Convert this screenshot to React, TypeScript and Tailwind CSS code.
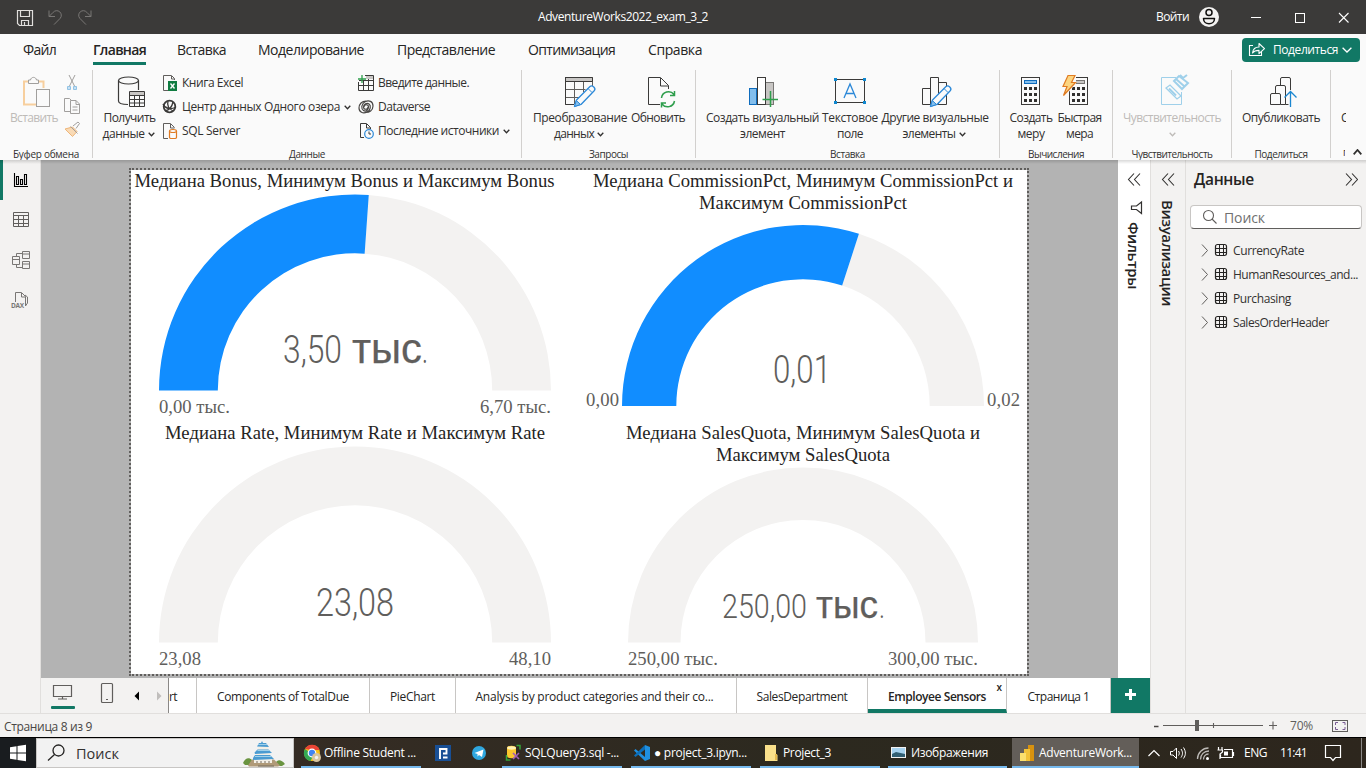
import React, { useLayoutEffect, useRef } from "react";

/* Text set to a given advance length by spreading its letter spacing. */
function T({ w, v, className = "", children }: { w: number; v?: boolean; className?: string; children: string }) {
  const ref = useRef<HTMLSpanElement>(null);
  useLayoutEffect(() => {
    const el = ref.current;
    if (!el) return;
    el.style.letterSpacing = "0px";
    const box = el.getBoundingClientRect();
    const len = v ? box.height : box.width;
    el.style.letterSpacing = `${(w - len) / children.length}px`;
  }, [w, v, children]);
  return (
    <span ref={ref} className={`inline-block shrink-0 whitespace-pre ${className}`}>
      {children}
    </span>
  );
}

/* Drawing whose coordinates are window coordinates of its own slot. */
function Art({ x, y, w, h, children }: { x: number; y: number; w: number; h: number; children: React.ReactNode }) {
  return (
    <svg width={w} height={h} viewBox={`${x} ${y} ${w} ${h}`} fill="none" className="block shrink-0">
      {children}
    </svg>
  );
}

function Chevron({ className = "text-[#323130]" }: { className?: string }) {
  return (
    <svg width="7" height="5" viewBox="0 0 7 5" fill="none" className={`shrink-0 ${className}`}>
      <path d="M.7 .8 3.5 3.8 6.3 .8" stroke="currentColor" strokeWidth="1.3" />
    </svg>
  );
}

const INK = "#3b3a39";

function TitleBar() {
  return (
    <header className="flex h-[34px] shrink-0 items-center bg-[#3b3a39] text-white">
      <div className="w-[538px]">
        <Art x={0} y={0} w={120} h={34}>
          <path d="M17.500 10.500h15v15h-13l-2-2z" stroke="#e1dfdd" strokeWidth="1.200" />
          <path d="M20.500 11v5.500h9V11M21.500 25v-4.500h7V25M24.500 22v3" stroke="#e1dfdd" strokeWidth="1.200" />
          <path d="M49 10.500v6h6M49.200 16.300l4-4a4.600 4.600 0 0 1 7 6l-6.200 6.300" stroke="#797775" />
          <path d="M91 10.500v6h-6M90.800 16.300l-4-4a4.600 4.600 0 0 0-7 6l6.200 6.300" stroke="#797775" />
        </Art>
      </div>
      <T w={170} className="text-[12px]">AdventureWorks2022_exam_3_2</T>
      <div className="ml-auto flex items-center">
        <T w={33} className="mr-[9px] text-[12px]">Войти</T>
        <Art x={1198} y={0} w={168} h={34}>
          <circle cx="1209" cy="17" r="10" fill="#f3f2f1" />
          <circle cx="1209" cy="12.500" r="3" stroke="#11100f" strokeWidth="1.500" />
          <path d="M1203.500 18.500h11c0 7-11 7-11 0z" stroke="#11100f" strokeWidth="1.500" strokeLinejoin="round" />
          <path d="M1251 17.500h10M1339 13l9.500 9.500M1348.500 13l-9.500 9.500" stroke="#fff" strokeWidth="1.100" />
          <rect x="1295.500" y="13.500" width="9" height="9" stroke="#fff" />
        </Art>
      </div>
    </header>
  );
}

function MenuBar() {
  return (
    <nav className="flex h-8 shrink-0 bg-[#fafafa] text-[14px] leading-8 text-[#252423]">
      <T w={33} className="ml-[23px]">Файл</T>
      <div className="ml-[37px] flex flex-col">
        <T w={53} className="h-7 font-semibold">Главная</T>
        <div className="h-[3px] w-[53px] bg-[#117865]" />
      </div>
      <T w={49} className="ml-[31px]">Вставка</T>
      <T w={106} className="ml-[32px]">Моделирование</T>
      <T w={98} className="ml-[33px]">Представление</T>
      <T w={87} className="ml-[33px]">Оптимизация</T>
      <T w={54} className="ml-[33px]">Справка</T>
      <button className="mt-1 mr-[6px] ml-auto flex h-6 w-[118px] items-center rounded bg-[#117865] text-white">
        <Art x={1242} y={38} w={31} h={24}>
          <path d="M1253 45.500h-3.500v10h12v-4" stroke="#fff" strokeWidth="1.100" />
          <path d="M1252.500 53c.5-4 3-6 6.500-6v-3.500l5.500 5.200-5.500 5v-3.300c-3 0-5 .6-6.500 2.600z" stroke="#fff" strokeWidth="1.100" strokeLinejoin="round" />
        </Art>
        <T w={65} className="text-[12px] leading-6">Поделиться</T>
        <svg width="10" height="6" viewBox="0 0 10 6" fill="none" className="ml-1">
          <path d="M.6 .7 5 5 9.400 .7" stroke="#fff" strokeWidth="1.300" />
        </svg>
      </button>
    </nav>
  );
}

function Big({ x, w, lines, chev, off, children }: {
  x: number; w: number; lines: [string, number][]; chev?: boolean; off?: boolean; children: React.ReactNode;
}) {
  return (
    <div className={`flex shrink-0 flex-col items-center text-[12px] leading-4 ${off ? "text-[#bebbb8]" : "text-[#323130]"}`}>
      <Art x={x} y={70} w={w} h={40}>{children}</Art>
      {lines.map(([text, len], i) => (
        <div key={i} className={`flex h-4 items-center gap-[3px] ${chev && text && i === lines.length - 1 ? "pr-[2px]" : ""}`}>
          {text && <T w={len}>{text}</T>}
          {chev && i === lines.length - 1 && <Chevron className={off ? "text-[#bebbb8]" : "text-[#323130]"} />}
        </div>
      ))}
    </div>
  );
}

function Group({ cls, name, len, children }: { cls: string; name: string; len: number; children: React.ReactNode }) {
  return (
    <section className={`flex shrink-0 flex-col border-r border-[#d2d0ce] ${cls}`}>
      <div className="flex h-[77px] shrink-0">{children}</div>
      <div className="flex h-[13px] shrink-0 justify-center pt-px text-[10px] leading-[13px] text-[#323130]">
        <T w={len}>{name}</T>
      </div>
    </section>
  );
}

function Row({ icon, text, len, chev }: { icon: React.ReactNode; text: string; len: number; chev?: boolean }) {
  return (
    <div className="flex h-6 items-center text-[12px] leading-6 text-[#323130]">
      <svg width="16" height="16" viewBox="0 0 16 16" fill="none" className="mr-[4px] shrink-0">{icon}</svg>
      <T w={len}>{text}</T>
      {chev && <div className="ml-1 flex"><Chevron /></div>}
    </div>
  );
}

const pencil = (x: number) => (
  <g>
    <path d={`M${x} 106.500l2-6.500 13.500-13.500c2.200-2 6.500 1.800 4.200 4.300L${x + 6.500} 104.500z`} fill="#fafafa" stroke="#2b88d8" strokeWidth="1.300" strokeLinejoin="round" />
    <path d={`M${x} 106.500l1.800-6 4.300 4z`} fill="#83beec" stroke="#2b88d8" />
    <path d={`M${x + 13.500} 88.500l4 4`} stroke="#2b88d8" />
  </g>
);

const keys = (x: number) => (
  <g fill="#323130">
    {[87, 93, 99].map((y) => [0, 5, 10].map((d) => <rect key={`${y}${d}`} x={x + d} y={y} width="3" height="3" />))}
  </g>
);

function Ribbon() {
  return (
    <div className="flex h-[94px] shrink-0 bg-[#fafafa] pt-1">
      <Group cls="h-[88px] w-[93px]" name="Буфер обмена" len={66}>
        <div className="w-1" />
        <Big x={4} w={60} off lines={[["Вставить", 48]]}>
          <path d="M28 81.500h-4v23H36M39 81.500h4.500V88" stroke="#f7cf9e" strokeWidth="2" />
          <path d="M28.500 83.500v-3.500h2c.5-3.500 5.500-3.500 6 0h2v3.500z" fill="#fafafa" stroke="#a19f9d" />
          <rect x="36.500" y="89.500" width="13" height="17" fill="#fafafa" stroke="#a19f9d" />
        </Big>
        <Art x={64} y={70} w={28} h={72}>
          <path d="M69 75l5.500 11M75 75l-5.500 11" stroke="#a19f9d" />
          <path d="M67.500 86.500h3v3h-3zM73.500 86.500h3v3h-3z" fill="#c7e0f4" stroke="#92c3e4" />
          <path d="M70 111.500h-5.500v-13h5l2 2M70.500 100.500h5.500l3.500 3.500v9.500h-9zM76 100.500v4h3.500M72.500 107h5M72.500 110h5" stroke="#a19f9d" />
          <path d="M65 129l7.500-2 4.500 4.500-4.500 5z" fill="#f9dab5" stroke="#eeb67a" />
          <path d="M70.500 126.500l7 7M73 126l5-4 1.500 1.500-3.500 5" stroke="#a19f9d" />
        </Art>
      </Group>

      <Group cls="h-[88px] w-[429px]" name="Данные" len={36}>
        <div className="w-1" />
        <Big x={97} w={65} chev lines={[["Получить", 52], ["данные", 42]]}>
          <ellipse cx="128.500" cy="80.500" rx="10" ry="3.500" stroke={INK} strokeWidth="1.200" />
          <path d="M118.500 80.500v20.500c0 2 4 3.500 9.500 3.500M138.500 80.500V90" stroke={INK} strokeWidth="1.200" />
          <path d="M129.500 91.500h15v15h-15z" fill="#fafafa" stroke={INK} />
          <path d="M130 92h14v3h-14z" fill="#c8c6c4" />
          <path d="M129.500 95.500h15M129.500 99.500h15M129.500 103h15M134.500 95v11M139.500 95v11" stroke={INK} />
        </Big>
        <div className="w-[196px] pt-[1px]">
          <Row text="Книга Excel" len={61} icon={<>
            <path d="M6 15.500H1.500V.500h8l3 3V5M9.500 1v3h3" stroke="#605e5c" />
            <rect x="6" y="6" width="9" height="10" fill="#107c41" />
            <path d="M8.500 8.500l4 5M12.500 8.500l-4 5" stroke="#fff" strokeWidth="1.300" />
          </>} />
          <Row text="Центр данных Одного озера" len={158} chev icon={<>
            <circle cx="7.500" cy="7.500" r="5.800" stroke={INK} strokeWidth="1.800" />
            <path d="M1 5c2 5 8 6 13 3M6 2c-1 4 1 8 5 10M3 12c4-1 7-4 8-9" stroke={INK} strokeWidth="1.300" />
          </>} />
          <Row text="SQL Server" len={58} icon={<>
            <path d="M6 15.500H1.500V.500h7l4 4M8.500 1v4h4" stroke="#605e5c" />
            <path d="M7.500 8v6.500c0 1.500 7 1.500 7 0V8" fill="#fafafa" stroke="#e07b22" strokeWidth="1.200" />
            <ellipse cx="11" cy="8" rx="3.500" ry="1.500" fill="#fafafa" stroke="#e07b22" strokeWidth="1.200" />
          </>} />
        </div>
        <div className="w-[160px] pt-[1px]">
          <Row text="Введите данные." len={91} icon={<>
            <path d="M7 .500h8.500v15H.500V7M1 5.500h14.500M.500 10.500h15M5.500 6v9.500M10.500 1v14.500" stroke={INK} />
            <path d="M8 1h7v3H8z" fill="#c8c6c4" />
            <path d="M4 0v8M0 4h8" stroke="#2e9e4c" strokeWidth="1.300" />
          </>} />
          <Row text="Dataverse" len={52} icon={<>
            <path d="M10 8c0 3-4.500 3-4.500 0S9 3.500 11 5s2 6-2 8-8 0-8-4 3-7 7-7M6 8c0-3 4.500-3 4.500 0S8 13 5.500 11.500 3 5 7 2.800s8-.3 8 4.200-4 6.500-7 6.500" stroke="#484644" strokeWidth="1.200" />
          </>} />
          <Row text="Последние источники" len={121} chev icon={<>
            <path d="M6 14.500H2.500V.500h6l4 4V6M8.500 1v4h4" stroke={INK} />
            <circle cx="11" cy="11" r="4.300" fill="#fafafa" stroke="#2b88d8" strokeWidth="1.200" />
            <path d="M11 8.500V11h2" stroke={INK} />
          </>} />
        </div>
      </Group>

      <Group cls="h-[88px] w-[174px]" name="Запросы" len={39}>
        <div className="w-[7px]" />
        <Big x={529} w={102} chev lines={[["Преобразование", 94], ["данных", 40]]}>
          <path d="M574 104.500h-8.500v-27h27V86M565.500 89.500h20M565.500 97.500h14M574.500 82v22M583.500 82v10" stroke="#605e5c" />
          <path d="M565.500 77.500h27v4h-27z" fill="#c8c6c4" stroke={INK} />
          <path d="M565.500 77v27.500H574" stroke={INK} />
          {pencil(574.500)}
        </Big>
        <Big x={631} w={53} lines={[["Обновить", 54]]}>
          <path d="M659 104.500h-11.500v-27h12l8 8V89M659.500 78v8h8" stroke={INK} />
          <path d="M660.500 98a7 7 0 0 1 12.500-3.500M673.500 91v4.500h-4.500M673.500 101a7 7 0 0 1-12.500 3M660.500 107.500V103h4.500" stroke="#2e9e4c" strokeWidth="1.500" />
        </Big>
      </Group>

      <Group cls="h-[88px] w-[304px]" name="Вставка" len={35}>
        <div className="w-[9px]" />
        <Big x={705} w={115} lines={[["Создать визуальный", 113], ["элемент", 45]]}>
          <rect x="749.500" y="88.500" width="7" height="16" fill="#83beec" stroke="#0f6cbd" />
          <rect x="765.500" y="82.500" width="8" height="22" fill="#c8c6c4" stroke="#797775" />
          <rect x="757.500" y="77.500" width="8" height="27" fill="#fff" stroke={INK} />
          <path d="M770.500 91v16M762.500 99.500h15.500" stroke="#2e9e4c" strokeWidth="1.500" />
        </Big>
        <Big x={820} w={60} lines={[["Текстовое", 56], ["поле", 26]]}>
          <rect x="835.500" y="79.500" width="29" height="23" stroke={INK} />
          <path d="M844 98l6-14 6 14M846 93.500h8" stroke="#2b88d8" strokeWidth="1.300" />
          <path d="M834 78h3v3h-3zM863 78h3v3h-3zM834 101h3v3h-3zM863 101h3v3h-3z" fill="#0f88d0" />
        </Big>
        <Big x={880} w={110} chev lines={[["Другие визуальные", 107], ["элементы", 53]]}>
          <path d="M922.500 88.500h8v16h-8zM930.500 77.500h8v27h-8zM938.500 82.500h8v22h-8z" stroke={INK} />
          {pencil(930.500)}
        </Big>
      </Group>

      <Group cls="h-[88px] w-[113px]" name="Вычисления" len={56}>
        <div className="w-[7px]" />
        <Big x={1007} w={48} lines={[["Создать", 43], ["меру", 27]]}>
          <rect x="1021.500" y="77.500" width="18" height="27" stroke={INK} />
          <rect x="1024.500" y="80.500" width="12" height="3" fill="#83beec" stroke="#0f6cbd" />
          {keys(1024)}
        </Big>
        <Big x={1055} w={49} lines={[["Быстрая", 44], ["мера", 27]]}>
          <rect x="1069.500" y="77.500" width="18" height="27" stroke={INK} />
          <rect x="1072.500" y="80.500" width="12" height="3" fill="#c8c6c4" stroke="#797775" />
          {keys(1072)}
          <path d="M1062 74h14v10l-4 4-8 10h-2z" fill="#fafafa" />
          <path d="M1068 75.500h7l-3.500 7h4l-12 13 3.500-9h-4z" fill="#fcd581" stroke="#e07b22" strokeWidth="1.200" />
        </Big>
      </Group>

      <Group cls="h-[88px] w-[119px]" name="Чувствительность" len={81}>
        <div className="w-[6px]" />
        <Big x={1119} w={106} off chev lines={[["Чувствительность", 98], ["", 0]]}>
          <path d="M1176 77.500h-14.500v27h20V92" stroke="#9fd0ea" />
          <path d="M1166 88l4-3 11 11-4 3z" fill="#fafafa" stroke="#9fd0ea" strokeWidth="1.300" />
          <path d="M1169 88.500l7 7" stroke="#9fd0ea" strokeWidth="2" />
          <path d="M1174 81l5-5 9 7-6 6zM1180 75l3.500 3.500M1176 79l8 7M1183 78l4-3" stroke="#9fd0ea" strokeWidth="2" />
        </Big>
      </Group>

      <Group cls="h-[88px] w-[99px]" name="Поделиться" len={53}>
        <div className="w-[7px]" />
        <Big x={1239} w={84} lines={[["Опубликовать", 78]]}>
          <path d="M1280.500 104.500h-10v-9.500q0-1.500 1.500-1.500h7q1.500 0 1.500 1.500zM1275.500 93v-6q0-1.500 1.500-1.500h7q1.500 0 1.500 1.500v17.500h-5M1280.500 85v-6q0-1.500 1.500-1.500h7q1.500 0 1.500 1.500V90M1285.500 104.500h3" stroke={INK} />
          <path d="M1290.500 107V91.500M1284.500 97.500l6-6 6 6" stroke="#1a86d0" strokeWidth="1.300" />
        </Big>
      </Group>

      <div className="flex flex-1 flex-col pl-[10px] text-[12px] text-[#323130]">
        <div className="mt-10 w-[5px] overflow-hidden leading-4">С</div>
        <div className="mt-[18px] flex items-center gap-[5px] text-[10px] leading-4">
          <span className="w-[4px] overflow-hidden pt-px pl-[2px]">п</span>
          <svg width="9" height="6" viewBox="0 0 9 6" fill="none" className="ml-[3px]"><path d="M.7 5.300 4.500 1l3.800 4.300" stroke="#323130" strokeWidth="1.800" /></svg>
        </div>
      </div>
    </div>
  );
}

function Rail() {
  return (
    <aside className="w-[41px] shrink-0 border-r border-[#e1dfdd] bg-[#f3f2f1]">
      <Art x={0} y={160} w={40} h={160}>
        <path d="M0 160h3v40H0z" fill="#117865" />
        <path d="M14.500 173v13.500H28M16.500 176.500h2v8h-2zM20.500 179.500h2v5h-2zM24.500 174.500h2v10h-2z" stroke="#000" strokeWidth="1.100" />
        <path d="M13.500 212.500h15v14h-15zM13.500 215.500h15M13.500 219.500h15M13.500 223.500h15M18.500 216v11M23.500 216v11" stroke="#605e5c" />
        <path d="M12.500 256.500h7v8h-7zM12.500 259.500h7M22.500 251.500h7v7h-7zM22.500 254h7M22.500 261.500h7v7h-7zM22.500 264h7M16.500 256v-2.500h6M16.500 265v2.500h6" stroke="#797775" />
        <path d="M15.500 302v-9.500h6l4 4v9.500M21.500 293v4h4M25 295l2.500 2v6l-2 3" stroke="#797775" />
        <text x="11" y="307.500" fontSize="6.500" fontWeight="700" fontFamily="Open Sans, sans-serif" textLength="13" fill="#797775">DAX</text>
      </Art>
    </aside>
  );
}

function arc(cx: number, cy: number, r: number, from: number, to: number) {
  const q = r * 0.7;
  const p = (rad: number, f: number) => {
    const a = Math.PI * (1 - f);
    return `${(cx + rad * Math.cos(a)).toFixed(2)} ${(cy - rad * Math.sin(a)).toFixed(2)}`;
  };
  return `M${p(r, from)}A${r} ${r} 0 0 1 ${p(r, to)}L${p(q, to)}A${q} ${q} 0 0 0 ${p(q, from)}Z`;
}

type Piece = { t: string; x: number; len: number; unit?: boolean };
type Gauge = {
  x: number; y: number; title: [string, number][]; shift?: boolean; cx: number; cy: number; r: number; fill: number;
  value: Piece[]; base: number; min: [string, number, number]; max: [string, number, number]; labelY: number; size: number;
};

const gauges: Gauge[] = [
  { x: 131, y: 170, title: [["Медиана Bonus, Минимум Bonus и Максимум Bonus", 420]], shift: true, cx: 355, cy: 390.5, r: 196, fill: 3.5 / 6.7,
    value: [{ t: "3,50", x: 283, len: 59 }, { t: "тыс", x: 352, len: 70, unit: true }, { t: ".", x: 422, len: 6 }], base: 363, min: ["0,00 тыс.", 159, 71], max: ["6,70 тыс.", 480, 71], labelY: 413, size: 38 },
  { x: 579, y: 170, title: [["Медиана CommissionPct, Минимум CommissionPct и", 420], ["Максимум CommissionPct", 208]], cx: 803, cy: 406, r: 181, fill: 0.6,
    value: [{ t: "0,01", x: 773, len: 58 }], base: 382.500, min: ["0,00", 586, 33], max: ["0,02", 987, 33], labelY: 406, size: 38 },
  { x: 131, y: 422, title: [["Медиана Rate, Минимум Rate и Максимум Rate", 380]], cx: 355, cy: 642.5, r: 196, fill: 0,
    value: [{ t: "23,08", x: 316, len: 78 }], base: 615.500, min: ["23,08", 159, 42], max: ["48,10", 509, 42], labelY: 665, size: 38 },
  { x: 579, y: 422, title: [["Медиана SalesQuota, Минимум SalesQuota и", 354], ["Максимум SalesQuota", 174]], cx: 803, cy: 642.5, r: 175, fill: 0,
    value: [{ t: "250,00", x: 722, len: 85 }, { t: "тыс", x: 816, len: 62, unit: true }, { t: ".", x: 879, len: 6 }], base: 618, min: ["250,00 тыс.", 628, 90], max: ["300,00 тыс.", 888, 90], labelY: 665, size: 34 },
];

function GaugeCard({ g }: { g: Gauge }) {
  const top = g.y + 22 * g.title.length;
  return (
    <div className="flex h-[252px] w-[448px] flex-col overflow-hidden">
      <div className={`flex flex-col items-center font-['Liberation_Serif',serif] text-[18.670px] leading-[22px] text-[#252423] ${g.shift ? "pr-[21px]" : ""}`}>
        {g.title.map(([t, len]) => <T key={t} w={len}>{t}</T>)}
      </div>
      <Art x={g.x} y={top} w={448} h={g.y + 252 - top}>
        <path d={arc(g.cx, g.cy, g.r, g.fill, 1)} fill="#f3f2f1" />
        {g.fill > 0 && <path d={arc(g.cx, g.cy, g.r, 0, g.fill)} fill="#118dff" />}
        {g.value.map((p) => (
          <text key={p.t} x={p.x} y={g.base} textLength={p.len} lengthAdjust="spacingAndGlyphs" fill="#605e5c"
            stroke="#605e5c" strokeWidth={p.unit ? 0.25 : 0}
            fontFamily={p.unit ? "Liberation Sans, sans-serif" : "Roboto, sans-serif"} fontWeight={p.unit ? 400 : 300}
            fontSize={p.unit ? g.size * 1.12 : g.size}>{p.t}</text>
        ))}
        {[g.min, g.max].map(([t, x, len]) => (
          <text key={t + x} x={x} y={g.labelY} textLength={len} fontFamily="Liberation Serif, serif" fontSize="18.670" fill="#605e5c">{t}</text>
        ))}
      </Art>
    </div>
  );
}

function Canvas() {
  return (
    <main className="w-[1077px] shrink-0 bg-[#b3b3b3] pt-2 pl-[88px]">
      <div className="flex h-[508px] w-[900px] flex-wrap border-2 border-dotted border-[#605e5c] bg-white bg-clip-padding">
        {gauges.map((g) => <GaugeCard key={`${g.x}-${g.y}`} g={g} />)}
      </div>
    </main>
  );
}

function PageTab({ cls, text, len }: { cls: string; text: string; len: number }) {
  return (
    <div className={`flex h-[35px] shrink-0 items-center justify-center overflow-hidden border-r border-[#c8c6c4] bg-white pt-[2px] text-[12px] text-[#252423] ${cls}`}>
      <T w={len}>{text}</T>
    </div>
  );
}

function PageTabs() {
  return (
    <div className="flex h-[35px] shrink-0 bg-[#f3f2f1]">
      <Art x={41} y={678} w={127} h={35}>
        <path d="M53.500 685.500h18v11h-18zM62.500 697v2M58 699h9" stroke="#605e5c" strokeWidth="1.200" />
        <rect x="51" y="706" width="24" height="3" rx="1" fill="#117865" />
        <rect x="101.500" y="683.500" width="11" height="19" rx="1" stroke="#605e5c" strokeWidth="1.200" />
        <path d="M106 699.500h2" stroke="#605e5c" />
        <path d="M139 691.500v9l-4.500-4.500z" fill="#000" />
        <path d="M157 691.500v9l4.500-4.500z" fill="#c0bebc" />
      </Art>
      <div className="w-px bg-[#8a8886]" />
      <div className="flex h-[35px] w-7 items-center border-r border-[#c8c6c4] bg-white pt-[2px] text-[12px] text-[#252423]"><T w={8}>rt</T></div>
      <PageTab cls="w-[173px]" text="Components of TotalDue" len={132} />
      <PageTab cls="w-[86px]" text="PieChart" len={45} />
      <PageTab cls="w-[281px] pr-[3px]" text="Analysis by product categories and their co..." len={238} />
      <PageTab cls="w-[131px]" text="SalesDepartment" len={91} />
      <div className="relative flex h-[35px] w-[139px] shrink-0 items-center justify-center border-r border-b-4 border-r-[#c8c6c4] border-b-[#117865] bg-white pt-[6px] text-[12px] font-semibold text-[#252423]">
        <T w={98}>Employee Sensors</T>
        <span className="absolute top-[3px] right-[4px] text-[10px] leading-3">x</span>
      </div>
      <PageTab cls="w-[104px]" text="Страница 1" len={62} />
      <Art x={1111} y={678} w={39} h={35}>
        <path d="M1111 678h39v35h-39z" fill="#117865" />
        <path d="M1130.500 689v11M1125 694.500h11" stroke="#fff" strokeWidth="3" />
      </Art>
    </div>
  );
}

function SideLabel({ x, cls, text, len, filter }: { x: number; cls: string; text: string; len: number; filter?: boolean }) {
  return (
    <div className={`flex shrink-0 flex-col items-center text-[#252423] ${cls}`}>
      <Art x={x} y={160} w={32} h={filter ? 62 : 40}>
        <path d={`M${x + 16} 173.500l-5.500 6 5.500 6M${x + 22} 173.500l-5.500 6 5.500 6`} stroke="#323130" strokeWidth="1.100" />
        {filter && <path d="M1141.500 202v11.500l-5-4h-5v-3.500h5z" stroke="#323130" strokeWidth="1.200" />}
      </Art>
      <T v w={len} className="text-[15px] leading-5 font-semibold [writing-mode:vertical-rl]">{text}</T>
    </div>
  );
}

const tables: [string, number][] = [["CurrencyRate", 71], ["HumanResources_and...", 125], ["Purchasing", 58], ["SalesOrderHeader", 96]];

function DataPanel() {
  return (
    <aside className="flex w-[181px] flex-col border-l border-[#e1dfdd] bg-[#f3f2f1]">
      <div className="flex h-[45px] items-center justify-between pt-0 pr-2 pb-[6px] pl-2">
        <T w={60} className="text-[15.500px] font-semibold text-[#252423]">Данные</T>
        <svg width="13" height="13" viewBox="0 0 13 13" fill="none"><path d="M1 .500l5.500 6-5.500 6M7 .500l5.500 6-5.500 6" stroke="#323130" strokeWidth="1.100" /></svg>
      </div>
      <div className="ml-1 flex h-[24px] w-[172px] items-center rounded border border-b-[#605e5c] border-[#c8c6c4] bg-white">
        <svg width="16" height="16" viewBox="0 0 16 16" fill="none" className="ml-[11px]">
          <circle cx="6.500" cy="6.500" r="5" stroke="#605e5c" strokeWidth="1.100" />
          <path d="M10 10l4.500 4.500" stroke="#605e5c" strokeWidth="1.100" />
        </svg>
        <T w={41} className="ml-[6px] text-[14px] text-[#707070]">Поиск</T>
      </div>
      <div className="mt-[10px]">
        {tables.map(([t, len]) => (
          <div key={t} className="flex h-6 items-center text-[12px] text-[#323130]">
            <Art x={1186} y={0} w={47} h={24}>
              <path d="M1202 5.500l5.500 6-5.500 6" stroke="#605e5c" />
              <rect x="1215.500" y="5.500" width="11" height="11" rx="2" stroke="#252423" strokeWidth="1.200" />
              <path d="M1219.500 6v11M1223.500 6v11M1215.500 9.500h11M1215.500 13.500h11" stroke="#252423" />
            </Art>
            <T w={len}>{t}</T>
          </div>
        ))}
      </div>
    </aside>
  );
}

function StatusBar() {
  return (
    <footer className="flex h-[25px] shrink-0 items-center border-t border-b border-t-[#e1dfdd] border-b-black bg-[#f3f2f1] pl-1 text-[12px] text-[#484644]">
      <T w={88} className="pt-[2px]">Страница 8 из 9</T>
      <div className="ml-auto flex items-center">
        <Art x={1150} y={714} w={140} h={23}>
          <path d="M1154 726.500h4.500" stroke="#484644" strokeWidth="1.500" />
          <path d="M1163 725.500h100M1213.500 723v5M1269 725.500h8M1273 721.500v8" stroke="#605e5c" strokeWidth="1.100" />
          <rect x="1195" y="720" width="4" height="11" fill="#605e5c" />
        </Art>
        <T w={23} className="text-[#605e5c]">70%</T>
        <Art x={1313} y={714} w={53} h={23}>
          <rect x="1332.500" y="720.500" width="15" height="11" stroke="#605e5c" />
          <path d="M1335.500 725v-2.500h2.500M1342.500 722.500h2.500v2.500M1345 727v2.500h-2.500M1338 729.500h-2.500V727" stroke="#7a5c94" />
        </Art>
      </div>
    </footer>
  );
}

function Task({ cls, x, icon, text, len, on, iw = 23 }: { cls: string; x: number; icon: React.ReactNode; text: string; len: number; on?: boolean; iw?: number }) {
  return (
    <div className={`flex h-[30px] shrink-0 items-center border-b-2 border-[#76b9ed] text-[12px] text-white ${on ? "bg-[#635e59]" : ""} ${cls}`}>
      <Art x={x} y={738} w={iw} h={28}>{icon}</Art>
      <T w={len} className="pt-px">{text}</T>
    </div>
  );
}

function Taskbar() {
  return (
    <footer className="flex h-[30px] shrink-0 bg-linear-to-r from-[#3a2e27] via-[#2c291f] via-60% to-[#2d261d]">
      <Art x={0} y={738} w={36} h={30}>
        <path d="M0 738h36v30H0z" fill="#191c1f" />
        <path d="M10 747.200l6.500-1v6.300H10zM17.500 746l8.500-1.200v7.700h-8.500zM10 753.500h6.500v6.300l-6.500-1zM17.500 753.500H26v7.700l-8.500-1.200z" fill="#fff" />
      </Art>
      <div className="flex w-[258px] shrink-0 items-center border border-[#c8c6c4] bg-[#f2f2f2] text-[14.500px] text-[#323130]">
        <Art x={37} y={739} w={39} h={28}>
          <circle cx="58.500" cy="750.500" r="5.500" stroke="#252423" strokeWidth="1.300" />
          <path d="M54.500 754.500l-6.500 6" stroke="#252423" strokeWidth="1.300" />
        </Art>
        <T w={43} className="pt-px">Поиск</T>
        <div className="ml-auto">
          <Art x={240} y={739} w={53} h={28}>
            <path d="M243 763c2-5 6-6 9-3l-1 5h-6zM275 764c2-5 6-5 10 0l-3 2h-6z" fill="#6a9440" />
            <path d="M248 765.500l4-6h22l6 6-2 1h-29z" fill="#b09a78" />
            <path d="M254 757h18v6h-18zM256 752h14v5h-14zM258 746h10v5h-10z" fill="#f3efe6" />
            <path d="M253 758l2-3h15l4 4-21 1zM254.500 752.500l3-3h11l3.500 3.500-17 1zM257 746.500l2-3.500h2l1-2 1 2h3l3 4z" fill="#4a9bd1" />
            <path d="M258 744.500h9M257.500 750.500h12M255 756.500h16" stroke="#9fd0ea" />
            <path d="M257 763v-2M261 763v-2M265 763v-2M269 763v-2M258 766h16" stroke="#756a5c" />
          </Art>
        </div>
      </div>
      <Task cls="ml-[7px] w-[120px]" x={301} text="Offline Student ..." len={92} icon={<>
        <circle cx="312" cy="753" r="8" fill="#fbc116" />
        <path d="M305 749a8 8 0 0 0 5.500 12l3-6z" fill="#34a853" />
        <path d="M305 749a8 8 0 0 1 14.600 1H312z" fill="#ea4335" />
        <circle cx="312" cy="753" r="3.800" fill="#4285f4" stroke="#fff" strokeWidth="1.200" />
        <circle cx="316.500" cy="757.500" r="4.500" fill="#d8c5a0" />
        <circle cx="316.500" cy="757.500" r="1.700" fill="#f3f2f1" />
      </>} />
      <Art x={421} y={738} w={81} h={30}>
        <rect x="435" y="745" width="16" height="16" fill="#184f95" />
        <path d="M440 759v-10h6.500v4.500h-3.500M443 757.500h4.500" stroke="#fff" strokeWidth="1.900" />
        <circle cx="479" cy="753" r="7" fill="#2fa7df" />
        <path d="M474.500 753l9-3.500-1.500 7.500-3-2-1.500 1.500v-2.500z" fill="#fff" />
      </Art>
      <Task cls="w-[120px]" x={502} text="SQLQuery3.sql -..." len={94} icon={<>
        <path d="M507 748c0-3 9-3 9 0v8c0 3-9 3-9 0z" fill="#fbc62c" />
        <ellipse cx="511.500" cy="748" rx="4.500" ry="1.700" fill="#fff0b3" />
        <path d="M506.500 755v5h4M516.500 745.500h3.500v4" stroke="#35a53a" strokeWidth="1.500" />
        <path d="M513 753l6 6M519 753l-6 6" stroke="#a05cb5" strokeWidth="1.600" />
      </>} />
      <Task cls="ml-[9px] w-[120px]" x={631} text="● project_3.ipyn..." len={93} icon={<>
        <path d="M645 745l5 2v12l-5 2-11-10.500 1.500-1.500L645 757z" fill="#1f8fe0" />
        <path d="M645 745v4.500l-9.500 7.500-1.500-1.500z" fill="#0b6db8" />
      </>} />
      <Task cls="ml-[9px] w-[120px]" x={760} text="Project_3" len={48} icon={<>
        <path d="M765 745h11v9l1.500 1v6H765z" fill="#f9e08b" />
        <path d="M775 754h2v6h-2z" fill="#e4b94f" />
      </>} />
      <Task cls="ml-[8px] w-[119px]" x={888} text="Изображения" len={77} icon={<>
        <rect x="891.500" y="747.500" width="14" height="10" fill="#a6d2ef" stroke="#f3f2f1" />
        <path d="M892 754l4-2 9 2v3h-13z" fill="#315f73" />
      </>} />
      <Task on iw={27} cls="ml-[5px] w-[127px]" x={1012} text="AdventureWork..." len={93} icon={<>
        <path d="M1028 745h6v16h-6z" fill="#d8920f" />
        <path d="M1024 749h6v12h-6z" fill="#f2c137" />
        <path d="M1020 753h6v8h-6z" fill="#fbdf6d" />
      </>} />
      <div className="flex flex-1 items-center text-[12px] text-white">
        <Art x={1139} y={738} w={105} h={30}>
          <path d="M1148.500 756l5.500-5.500 5.500 5.500" stroke="#fff" strokeWidth="1.200" />
          <path d="M1170.500 751.500h2.500l3.500-3.500v10.500l-3.500-3.500h-2.500zM1178.500 751c1 1.500 1 3 0 4.500M1181 749c2 3 2 5.500 0 8.500M1183.500 747.500c2.500 4 2.500 7.500 0 11" stroke="#fff" />
          <path d="M1197.500 759c0-6 5-11 11-11M1200.500 759.500c0-5 3.500-8.500 8.500-8.500M1203.500 759.500c0-3 2-5.500 5-5.500" stroke="#bdbab7" strokeWidth="1.300" />
          <circle cx="1207.500" cy="758.500" r="1.500" fill="#fff" />
          <path d="M1224 749.500h8.500v8h-12v-3M1233.500 752v4M1218.500 747v3M1222 747v3M1217.500 750h5v2l-2.500 2v5" stroke="#fff" strokeWidth="1.200" />
          <path d="M1224 751.500h4v4h-4z" fill="#fff" />
        </Art>
        <T w={23}>ENG</T>
        <div className="w-[13px]" />
        <T w={27}>11:41</T>
        <Art x={1307} y={738} w={59} h={30}>
          <path d="M1325.500 745.500h15v12h-5l-2.500 3-2.500-3h-5z" stroke="#fff" strokeWidth="1.200" />
          <path d="M1361.500 738v30" stroke="#8a8886" />
        </Art>
      </div>
    </footer>
  );
}

export default function App() {
  return (
    <div className="flex h-[768px] w-[1366px] flex-col overflow-hidden bg-[#f3f2f1] font-['Open_Sans','Noto_Sans',sans-serif]">
      <TitleBar />
      <MenuBar />
      <Ribbon />
      <div className="relative flex h-[553px] shrink-0">
        <div className="absolute inset-x-0 top-0 h-1 bg-linear-to-b from-black/15 to-transparent" />
        <Rail />
        <div className="flex w-[1109px] shrink-0 flex-col">
          <div className="flex h-[518px] shrink-0">
            <Canvas />
            <SideLabel x={1118} cls="w-8 bg-white" text="Фильтры" len={67} filter />
          </div>
          <PageTabs />
        </div>
        <SideLabel x={1151} cls="w-[35px] border-l border-[#e1dfdd] bg-[#f3f2f1]" text="Визуализации" len={106} />
        <DataPanel />
      </div>
      <StatusBar />
      <Taskbar />
    </div>
  );
}
